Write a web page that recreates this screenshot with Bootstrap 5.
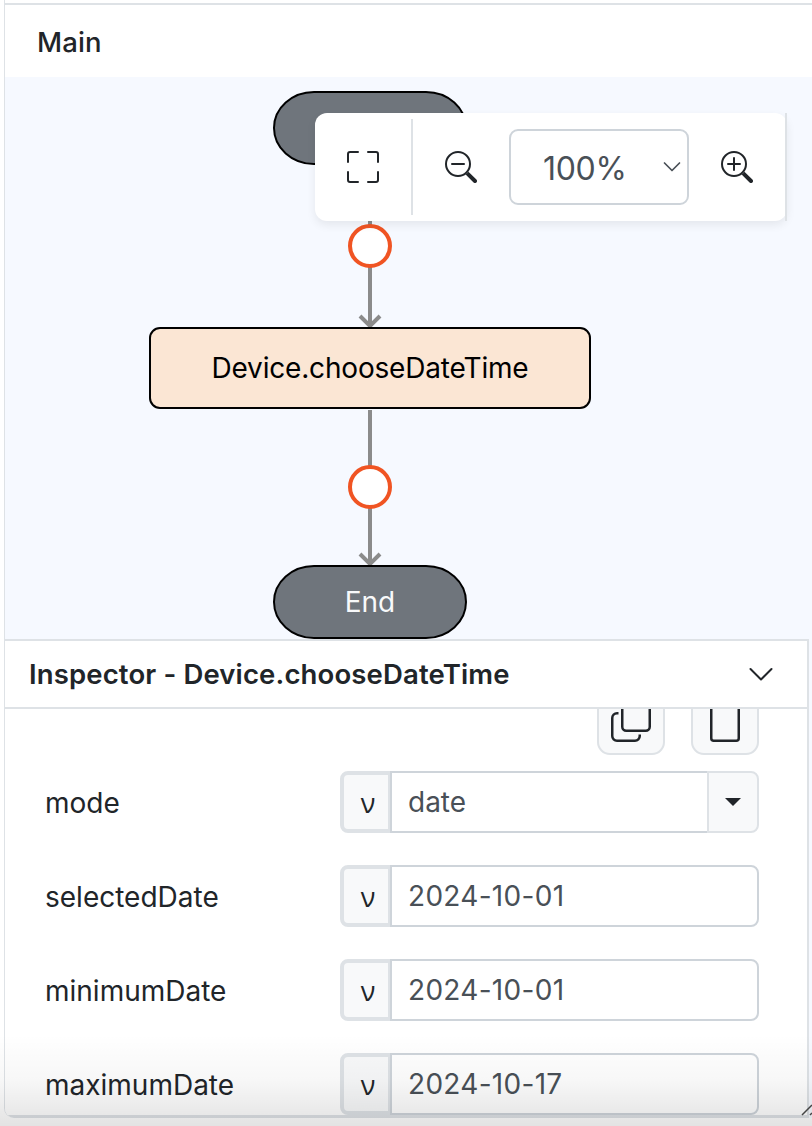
<!DOCTYPE html>
<html lang="en">
<head>
<meta charset="utf-8">
<meta name="viewport" content="width=device-width, initial-scale=1">
<title>Main</title>
<link href="https://cdn.jsdelivr.net/npm/bootstrap@5.3.0/dist/css/bootstrap.min.css" rel="stylesheet">
<style>
  body { font-family: Inter, sans-serif; font-size: 28px; line-height: 1.5; color: #212529; height: 1126px; overflow: hidden; background: #fff; }
  .editor { height: 1118px; margin: 0 0 0 4px; border-left: 1px solid #dee2e6; border-bottom-left-radius: 10px; overflow: hidden; }
  .rule-top { height: 5px; border-bottom: 2px solid #dee2e6; }
  .main-head { height: 72px; padding: 4px 0 0 32px; font-weight: 500; font-size: 27.5px; letter-spacing: .15px; }
  .stage { background: #f6f9ff; height: 1041px; }
  .flow { height: 562px; }
  .flow > svg { left: 0; top: 0; }
  .zoombar { left: 310px; top: 36px; width: 472px; height: 108px; background: #fff; border-radius: 12px; box-shadow: 0 4px 10px rgba(0,0,0,.075); }
  .zoombar .fit { width: 98px; height: 96px; border-right: 2px solid #dee2e6; }
  .zoombar .edge { right: 0; top: 0; width: 2px; height: 108px; background: #dee2e6; }
  .zoombar .side { width: 96px; }
  .zoom-pick { width: 180px; height: 76px; border: 2px solid #ced4da; border-radius: 9px; color: #495057; font-size: 32px; letter-spacing: -.3px; padding-left: 32px; padding-right: 5px; }
  .zoom-pick span { padding-top: 3px; }
  .inspector { width: 804px; height: 479px; background: #fff; border: 2px solid #dee2e6; border-left: 0; border-bottom: 3px solid #dee2e6; }
  .insp-head { height: 68px; border-bottom: 2px solid #dee2e6; padding: 0 34px 0 24px; font-weight: 600; font-size: 27.5px; letter-spacing: .14px; }
  .insp-head span { padding-top: 1px; }
  .insp-body { height: 406px; padding: 0 48px 0 40px; overflow: hidden; }
  .tools { height: 46px; margin-bottom: 16px; gap: 26px; }
  .tool { width: 68px; height: 60px; margin-top: -14px; background: #f8f9fa; border: 2px solid #dee2e6; border-radius: 13px; padding: 0 0 11px; }
  .prop { height: 62px; margin-bottom: 32px; }
  .prop .name { width: 295px; flex: none; padding-top: 1px; }
  .prop .input-group { flex-wrap: nowrap; width: 419px; height: 62px; }
  .prop .kind { width: 50px; border: 4px solid #dee2e6; border-right: 2px solid #dee2e6; border-radius: 8px 0 0 8px; background: #f8f9fa; padding: 2px 0 0 4px; font-family: "Open Sans", sans-serif; font-size: 27px; color: #212529; }
  .prop .form-control { border: 2px solid #ced4da; margin-left: 0 !important; border-radius: 0 8px 8px 0; color: #495057; font-size: 28px; padding: 0 16px; line-height: 59px; height: 62px; }
  .prop .date { letter-spacing: .3px; }
  .prop .pick { width: 52px; background: #f8f9fa; border: 2px solid #dee2e6; border-radius: 0 8px 8px 0; padding: 0; flex: none; margin-left: 0 !important; }
  .fade-low { left: 0; bottom: 0; width: 812px; height: 92px; background: linear-gradient(rgba(0,0,0,0), rgba(0,0,0,.03) 50%, rgba(0,0,0,.11)); pointer-events: none; }
  .grip { right: 0; bottom: 6px; }
</style>
</head>
<body class="position-relative">
<div class="editor">
  <div class="rule-top"></div>
  <div class="main-head d-flex align-items-center">Main</div>
  <div class="stage">
    <div class="flow position-relative">
      <svg class="position-absolute" width="807" height="562" viewBox="5 77 807 562" font-family="Inter, sans-serif" font-size="28" text-anchor="middle">
        <g fill="none" stroke="#8b8b8b" stroke-width="4">
          <path d="M370 165V326M370 410V564"/>
          <path d="M360 316l10 10 10-10M360 554l10 10 10-10"/>
        </g>
        <g fill="#6f757c" stroke="#000" stroke-width="2">
          <rect x="274" y="92" width="192" height="72" rx="40" ry="36"/>
          <rect x="274" y="566" width="192" height="72" rx="40" ry="36"/>
        </g>
        <g fill="#fff" stroke="#f05423" stroke-width="4">
          <circle cx="370" cy="246" r="20"/>
          <circle cx="370" cy="487" r="20"/>
        </g>
        <rect x="150" y="328" width="440" height="80" rx="10" fill="#fbe6d4" stroke="#000" stroke-width="2"/>
        <text x="370" y="378" fill="#000" letter-spacing="-.18">Device.chooseDateTime</text>
        <text x="370" y="612" fill="#f8f9fa">End</text>
      </svg>
      <div class="zoombar position-absolute d-flex align-items-center">
        <div class="fit d-flex align-items-center justify-content-center">
          <svg width="32" height="32" viewBox="0 0 16 16" fill="currentColor"><path d="M1.500 1a.5.5 0 0 0-.5.5v4a.5.5 0 0 1-1 0v-4A1.500 1.500 0 0 1 1.500 0h4a.5.5 0 0 1 0 1zM10 .5a.5.5 0 0 1 .5-.5h4A1.500 1.500 0 0 1 16 1.500v4a.5.5 0 0 1-1 0v-4a.5.5 0 0 0-.5-.5h-4a.5.5 0 0 1-.5-.5M.5 10a.5.5 0 0 1 .5.5v4a.5.5 0 0 0 .5.5h4a.5.5 0 0 1 0 1h-4A1.500 1.500 0 0 1 0 14.500v-4a.5.5 0 0 1 .5-.5m15 0a.5.5 0 0 1 .5.5v4a1.500 1.500 0 0 1-1.500 1.500h-4a.5.5 0 0 1 0-1h4a.5.5 0 0 0 .5-.5v-4a.5.5 0 0 1 .5-.5"/></svg>
        </div>
        <div class="side d-flex align-items-center justify-content-center">
          <svg width="32" height="32" viewBox="0 0 16 16" fill="currentColor"><path fill-rule="evenodd" d="M6.500 12a5.500 5.500 0 1 0 0-11 5.500 5.500 0 0 0 0 11M13 6.500a6.500 6.500 0 1 1-13 0 6.500 6.500 0 0 1 13 0"/><path d="M10.344 11.742q.044.06.098.115l3.850 3.850a1 1 0 0 0 1.415-1.414l-3.850-3.850a1 1 0 0 0-.115-.1 6.500 6.500 0 0 1-1.398 1.400z"/><path d="M3 6.500a.5.5 0 0 1 .5-.5h6a.5.5 0 0 1 0 1h-6a.5.5 0 0 1-.5-.5"/></svg>
        </div>
        <div class="zoom-pick d-flex align-items-center justify-content-between"><span>100%</span>
          <svg width="20" height="20" viewBox="0 0 20 20" fill="none" stroke="#495057" stroke-width="1.700" stroke-linecap="round" stroke-linejoin="round"><path d="M2.500 6l7.500 7.500L17.500 6"/></svg>
        </div>
        <div class="side d-flex align-items-center justify-content-center">
          <svg width="32" height="32" viewBox="0 0 16 16" fill="currentColor"><path fill-rule="evenodd" d="M6.500 12a5.500 5.500 0 1 0 0-11 5.500 5.500 0 0 0 0 11M13 6.500a6.500 6.500 0 1 1-13 0 6.500 6.500 0 0 1 13 0"/><path d="M10.344 11.742q.044.06.098.115l3.850 3.850a1 1 0 0 0 1.415-1.414l-3.850-3.850a1 1 0 0 0-.115-.1 6.500 6.500 0 0 1-1.398 1.400z"/><path d="M6.500 3a.5.5 0 0 1 .5.5V6h2.500a.5.5 0 0 1 0 1H7v2.500a.5.5 0 0 1-1 0V7H3.500a.5.5 0 0 1 0-1H6V3.500a.5.5 0 0 1 .5-.5"/></svg>
        </div>
        <div class="edge position-absolute"></div>
      </div>
    </div>
    <div class="inspector">
      <div class="insp-head d-flex align-items-center justify-content-between"><span>Inspector - Device.chooseDateTime</span>
        <svg width="24" height="24" viewBox="0 0 24 24" fill="none" stroke="currentColor" stroke-width="2" stroke-linecap="round" stroke-linejoin="round"><path d="M1.500 7L12 17.500 22.500 7"/></svg>
      </div>
      <div class="insp-body">
        <div class="tools d-flex justify-content-end">
          <div class="tool d-flex align-items-end justify-content-center">
            <svg width="40" height="40" viewBox="0 0 40 40" fill="none" stroke="currentColor" stroke-width="2.500"><rect x="11.250" y="-10" width="27.500" height="38.750" rx="4"/><path d="M7.500 11.250H6a4.750 4.750 0 0 0-4.750 4.750V34A4.750 4.750 0 0 0 6 38.750H24A4.750 4.750 0 0 0 28.750 34V32.500"/></svg>
          </div>
          <div class="tool d-flex align-items-end justify-content-center">
            <svg width="40" height="40" viewBox="0 0 40 40" fill="none" stroke="currentColor" stroke-width="2.500"><rect x="6.250" y="-10" width="27.500" height="48.750" rx="2.500"/></svg>
          </div>
        </div>
        <div class="prop d-flex align-items-center"><label class="name">mode</label>
          <div class="input-group"><span class="input-group-text kind justify-content-center">ν</span><div class="form-control rounded-0 border-end-0">date</div><button class="btn pick d-flex align-items-center justify-content-center" aria-label="Options"><svg width="16" height="8" viewBox="0 0 16 8"><path d="M0 0h16L8 8z" fill="#212529"/></svg></button></div>
        </div>
        <div class="prop d-flex align-items-center"><label class="name">selectedDate</label>
          <div class="input-group"><span class="input-group-text kind justify-content-center">ν</span><div class="form-control date">2024-10-01</div></div>
        </div>
        <div class="prop d-flex align-items-center"><label class="name">minimumDate</label>
          <div class="input-group"><span class="input-group-text kind justify-content-center">ν</span><div class="form-control date">2024-10-01</div></div>
        </div>
        <div class="prop d-flex align-items-center mb-0"><label class="name">maximumDate</label>
          <div class="input-group"><span class="input-group-text kind justify-content-center">ν</span><div class="form-control date">2024-10-17</div></div>
        </div>
      </div>
    </div>
  </div>
</div>
<div class="fade-low position-absolute"></div>
<svg class="grip position-absolute" width="12" height="16" viewBox="0 0 12 16" fill="none" stroke="#444" stroke-width="1.500"><path d="M2 11L12 1M10 11l2-2"/></svg>
<script src="https://cdn.jsdelivr.net/npm/bootstrap@5.3.0/dist/js/bootstrap.bundle.min.js"></script>
</body>
</html>
